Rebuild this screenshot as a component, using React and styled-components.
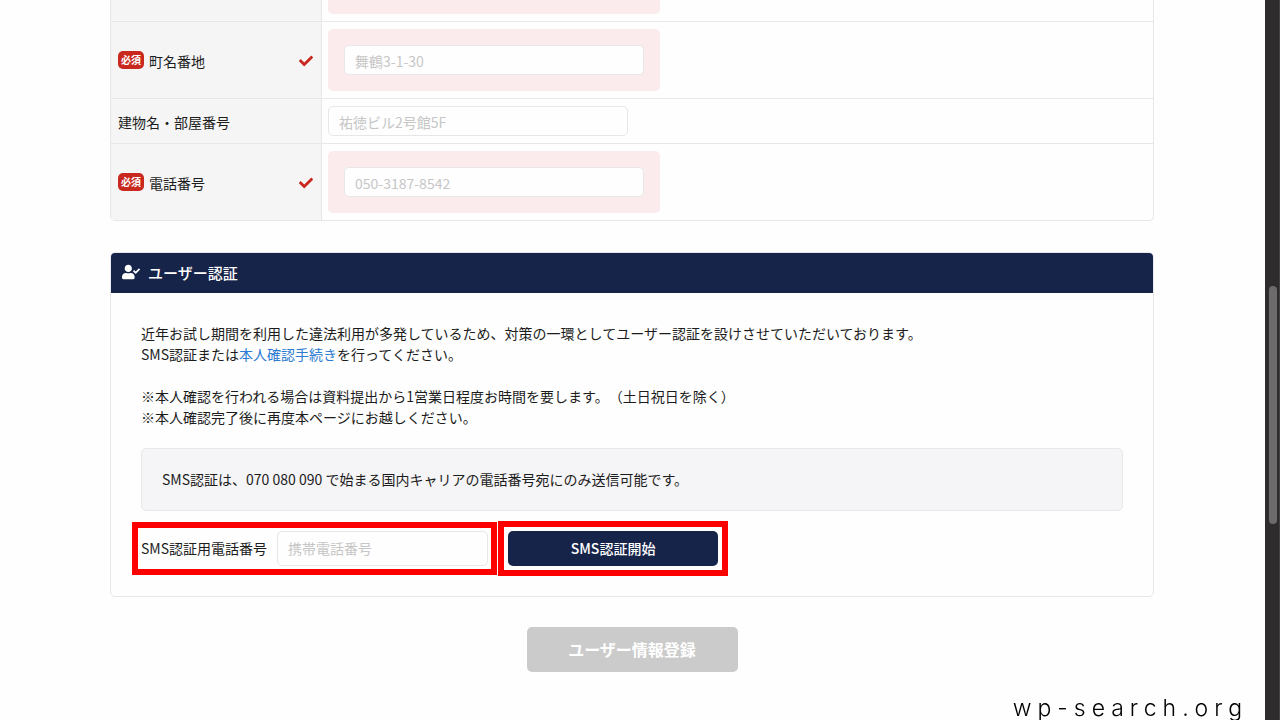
import styled, { createGlobalStyle } from "styled-components";
import { FaCheck, FaUserCheck } from "react-icons/fa";

const colors = {
  navy: "#17244a",
  red: "#c9281e",
  line: "#e7e7e9",
  text: "#1c1c1c",
  pink: "#fcebec",
};

const fields = [
  { id: "street", label: "町名番地", placeholder: "舞鶴3-1-30", required: true },
  { id: "building", label: "建物名・部屋番号", placeholder: "祐徳ビル2号館5F" },
  { id: "tel", label: "電話番号", placeholder: "050-3187-8542", required: true },
];

const App = () => {
  return (
    <Page>
      <GlobalStyle />
      <Main>
        <FieldTable>
          <Row>
            <HeadCell />
            <Cell>
              <RequiredTail />
            </Cell>
          </Row>
          {fields.map(({ id, label, placeholder, required }) => (
            <Row key={id}>
              <HeadCell>
                {required && <Badge>必須</Badge>}
                <label htmlFor={id}>{label}</label>
                {required && <CheckIcon />}
              </HeadCell>
              <Cell>
                <InputWrap $required={required}>
                  <Input id={id} type="text" placeholder={placeholder} />
                </InputWrap>
              </Cell>
            </Row>
          ))}
        </FieldTable>

        <Section>
          <SectionTitle>
            <FaUserCheck size={18} />
            ユーザー認証
          </SectionTitle>
          <SectionBody>
            <Text>
              近年お試し期間を利用した違法利用が多発しているため、対策の一環としてユーザー認証を設けさせていただいております。
              <br />
              SMS認証または<a href="#identity">本人確認手続き</a>を行ってください。
            </Text>
            <Text>
              ※本人確認を行われる場合は資料提出から1営業日程度お時間を要します。（土日祝日を除く）
              <br />
              ※本人確認完了後に再度本ページにお越しください。
            </Text>
            <Notice>
              SMS認証は、070 080 090 で始まる国内キャリアの電話番号宛にのみ送信可能です。
            </Notice>
            <SmsRow>
              <Highlight>
                <label htmlFor="sms">SMS認証用電話番号</label>
                <SmsInput id="sms" type="tel" placeholder="携帯電話番号" />
              </Highlight>
              <Highlight $roomy>
                <SmsButton type="button">SMS認証開始</SmsButton>
              </Highlight>
            </SmsRow>
          </SectionBody>
        </Section>

        <SubmitButton type="button">ユーザー情報登録</SubmitButton>
      </Main>
      <Rail>
        <Thumb />
      </Rail>
      <Watermark>wp-search.org</Watermark>
    </Page>
  );
};

const GlobalStyle = createGlobalStyle`
  * {
    box-sizing: border-box;
  }

  body {
    margin: 0;
    background: #fefefe;
    color: ${colors.text};
    font-family: "Noto Sans CJK JP", "Noto Sans", sans-serif;
    font-size: 14px;
    line-height: 21px;
    text-spacing-trim: space-all;
  }

  input,
  button {
    font: inherit;
  }

  a {
    color: #2b7bd0;
    text-decoration: none;
  }
`;

const Page = styled.div`
  display: flex;
  min-height: 100vh;
`;

const Main = styled.main`
  flex: 1;
  display: flex;
  flex-direction: column;
  padding: 0 111px 48px 110px;
`;

const FieldTable = styled.div`
  border: 1px solid ${colors.line};
  border-top: none;
  border-radius: 0 0 5px 5px;
  overflow: hidden;
`;

const Row = styled.div`
  display: flex;

  & + & {
    border-top: 1px solid ${colors.line};
  }
`;

const HeadCell = styled.div`
  display: flex;
  align-items: center;
  flex: none;
  width: 211px;
  padding: 2px 8px 0 7px;
  background: #f5f5f6;
  border-right: 1px solid ${colors.line};
`;

const Cell = styled.div`
  flex: 1;
  display: flex;
  padding: 7px 6px;
`;

const RequiredTail = styled.div`
  width: 332px;
  height: 14px;
  margin-top: -7px;
  background: ${colors.pink};
  border-radius: 0 0 5px 5px;
`;

const InputWrap = styled.div`
  padding: ${({ $required }) => ($required ? "16px" : "0")};
  background: ${({ $required }) => ($required ? colors.pink : "none")};
  border-radius: 5px;
`;

const Input = styled.input`
  display: block;
  width: 300px;
  height: 30px;
  padding: 2px 10px 0;
  background: #fefefe;
  border: 1px solid ${colors.line};
  border-radius: 5px;
  color: ${colors.text};

  &::placeholder {
    color: #c6c6c6;
    opacity: 1;
  }
`;

const Badge = styled.span`
  width: 26px;
  height: 18px;
  margin: 0 5px 2px 0;
  background: ${colors.red};
  border-radius: 5px;
  color: #fff;
  font-size: 10px;
  font-weight: 700;
  line-height: 18px;
  text-align: center;
`;

const CheckIcon = styled(FaCheck)`
  margin-left: auto;
  font-size: 14px;
  color: ${colors.red};
`;

const Section = styled.section`
  margin-top: 31px;
  border: 1px solid ${colors.line};
  border-radius: 5px;
  overflow: hidden;
`;

const SectionTitle = styled.h2`
  display: flex;
  align-items: center;
  gap: 8px;
  height: 40px;
  margin: 0;
  padding: 0 11px 2px;
  background: ${colors.navy};
  color: #fff;
  font-size: 15px;
  font-weight: 500;
`;

const SectionBody = styled.div`
  padding: 30px 30px 20px;
`;

const Text = styled.p`
  margin: 0;

  & + & {
    margin-top: 21px;
  }
`;

const Notice = styled.div`
  margin-top: 20px;
  padding: 20px;
  background: #f5f4f6;
  border: 1px solid ${colors.line};
  border-radius: 5px;
`;

const SmsRow = styled.div`
  display: flex;
  align-items: center;
  gap: 1px;
  margin: 10px 0 0 -9px;
`;

const Highlight = styled.div`
  display: flex;
  align-items: center;
  gap: 10px;
  padding: ${({ $roomy }) => ($roomy ? "4px" : "3px")};
  border: 6px solid #fe0000;
`;

const SmsInput = styled(Input)`
  width: 211px;
  height: 35px;
  padding: 0 10px 2px;
`;

const SmsButton = styled.button`
  width: 210px;
  height: 35px;
  padding: 0;
  background: ${colors.navy};
  border: none;
  border-radius: 5px;
  color: #fff;
  font-weight: 500;
`;

const SubmitButton = styled.button`
  align-self: center;
  width: 211px;
  height: 45px;
  margin-top: 30px;
  background: #cbcbcb;
  border: none;
  border-radius: 5px;
  color: #fff;
  font-size: 16px;
  font-weight: 700;
`;

const Rail = styled.div`
  width: 15px;
  padding: 286px 2px 0 4px;
  background: #2e2c2d;
  border-right: 1px solid #444243;
`;

const Thumb = styled.div`
  height: 238px;
  background: #6d6b6c;
  border-radius: 4px;
`;

const Watermark = styled.div`
  position: fixed;
  right: 32px;
  bottom: -4px;
  color: #000;
  font-family: Inter, sans-serif;
  font-size: 23px;
  font-weight: 300;
  line-height: 32px;
  letter-spacing: 6px;
`;

export default App;
